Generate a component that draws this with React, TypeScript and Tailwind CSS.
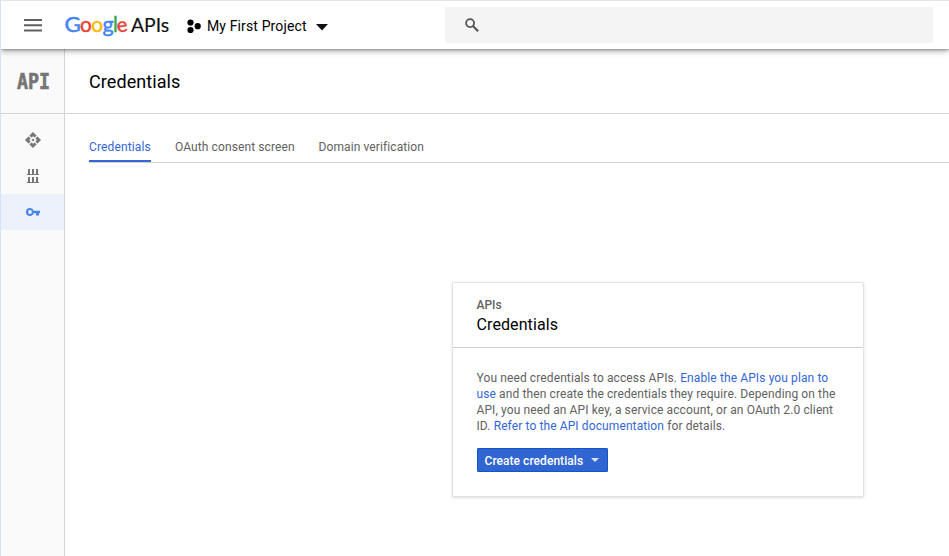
import React from "react";

function GoogleLogo() {
  return (
    <svg width="108" height="32" viewBox="0 0 108 32" className="ml-[21px] shrink-0" aria-label="Google APIs">
      <g fontFamily="Lato, sans-serif" fontSize="20.5" strokeWidth="0.45">
        <text x="1.5" y="23" fill="#4285f4" stroke="#4285f4" textLength="16.4" lengthAdjust="spacingAndGlyphs">G</text>
        <text x="17" y="23" fill="#ea4335" stroke="#ea4335" textLength="11.8" lengthAdjust="spacingAndGlyphs">o</text>
        <text x="28.2" y="23" fill="#fbbc05" stroke="#fbbc05" textLength="11.8" lengthAdjust="spacingAndGlyphs">o</text>
        <text x="39.4" y="23" fill="#4285f4" stroke="#4285f4" textLength="11.2" lengthAdjust="spacingAndGlyphs">g</text>
        <text x="50" y="23" fill="#34a853" stroke="#34a853">l</text>
        <text x="53.8" y="23" fill="#ea4335" stroke="#ea4335" textLength="10.7" lengthAdjust="spacingAndGlyphs" transform="rotate(-10 59 18)">e</text>
      </g>
      <text x="68" y="23" fontFamily="Lato, sans-serif" fontSize="20" fill="#111" stroke="#111" strokeWidth="0.15" textLength="38.2" lengthAdjust="spacingAndGlyphs">APIs</text>
    </svg>
  );
}

function Header() {
  return (
    <header className="relative z-10 flex h-[49px] shrink-0 items-start border-t border-[#e4e4e4] bg-white shadow-[0_1px_2px_rgba(0,0,0,0.22),0_2px_6px_rgba(0,0,0,0.35)]">
      <svg width="18" height="13" viewBox="0 0 18 13" className="mt-[18px] ml-[23px] shrink-0" fill="#616161">
        <path d="M0 0h18v2H0zM0 5.3h18v2H0zM0 10.6h18v2H0z" />
      </svg>
      <div className="mt-2 flex"><GoogleLogo /></div>
      <svg width="14" height="15" viewBox="0 0 14 15" className="mt-[18px] ml-[16px] shrink-0" fill="#000">
        <circle cx="3.5" cy="3.5" r="3.1" />
        <circle cx="10.7" cy="7.2" r="3.1" />
        <circle cx="3.5" cy="11" r="3.1" />
      </svg>
      <span className="mt-[15px] ml-[6px] w-[100px] text-[14px] leading-5 tracking-[0.13px] whitespace-nowrap text-black">My First Project</span>
      <svg width="12" height="7" viewBox="0 0 12 7" className="mt-[23px] ml-[9px] shrink-0">
        <path d="M0 0h12L6 6.5z" fill="#111" />
      </svg>
      <div className="mt-[6px] mr-4 ml-auto h-9 w-[488px] rounded-[2px] bg-[#f4f4f4] pt-[11px] pl-5">
        <svg width="14" height="14" viewBox="0 0 14 14" fill="none" stroke="#555">
          <circle cx="5.1" cy="5.1" r="4" strokeWidth="1.8" />
          <path d="M8.2 8.2l5 5" strokeWidth="2.1" />
        </svg>
      </div>
    </header>
  );
}

function Sidebar() {
  return (
    <aside className="flex w-[64px] shrink-0 flex-col border-r border-[#d4d4d4] bg-[#fafafa]">
      <div className="flex h-[65px] items-start border-b border-[#d4d4d4] pt-[14px] pl-[12px]">
        <svg width="44" height="36" viewBox="0 0 44 36" fill="#757575" stroke="#757575" strokeWidth="0.6">
          <text x="4" y="25.7" fontFamily="'DejaVu Sans Mono', monospace" fontWeight="700" fontSize="21" textLength="33" lengthAdjust="spacingAndGlyphs">API</text>
        </svg>
      </div>
      <div className="mt-2 flex h-9 items-center justify-center">
        <svg width="16" height="16" viewBox="0.5 0.5 23 23" fill="#757575" stroke="#757575" strokeWidth="0.9" strokeLinejoin="round">
          <path d="M12 6l2.12 2.12 2.5-2.5L12 1 7.38 5.62l2.5 2.5zM6 12l2.12-2.12-2.5-2.5L1 12l4.62 4.62 2.5-2.5zM18 12l-2.12 2.12 2.5 2.5L23 12l-4.62-4.62-2.5 2.5zM12 18l-2.12-2.12-2.5 2.5L12 23l4.62-4.62-2.5-2.5z" />
          <circle cx="12" cy="12" r="1.4" />
        </svg>
      </div>
      <div className="flex h-9 items-center justify-center">
        <svg width="12" height="14" viewBox="0 0 12 14" fill="#757575">
          <path d="M1 0h2v5h2V0h2v5h2V0h2v5h1v1H0V5h1zM1 8h2v5h2V8h2v5h2V8h2v5h1v1H0v-1h1z" />
        </svg>
      </div>
      <div className="flex h-9 items-center justify-center bg-[#ebf0fa]">
        <svg width="14" height="8" viewBox="0 0 14 8" fill="#4a86e8">
          <path fillRule="evenodd" d="M4 0a4 4 0 0 1 3.7 2.8H14v2.5h-1V7.5h-3V5.3H7.7A4 4 0 1 1 4 0zm0 2.1a1.9 1.9 0 1 0 0 3.8 1.9 1.9 0 0 0 0-3.8z" />
        </svg>
      </div>
    </aside>
  );
}

function CredentialsCard() {
  return (
    <section className="mt-[119px] ml-[387px] h-[215px] w-[412px] rounded-[2px] border border-[#e2e2e2] bg-white shadow-[0_1px_3px_rgba(0,0,0,0.14)]">
      <div className="h-[65px] border-b border-[#d0d0d0] pt-[14px] pl-[23.5px]">
        <div className="text-[12px] leading-4 font-medium text-[#616161]">APIs</div>
        <div className="mt-[1px] text-[16px] leading-[22px] tracking-[0.1px] text-black">Credentials</div>
      </div>
      <div className="pt-[22px] pl-[23.5px]">
        <p className="text-[12px] leading-4 tracking-[0.11px] whitespace-nowrap text-[#616161]">
          You need credentials to access APIs. <a className="text-[#3367d6]">Enable the APIs you plan to</a><br />
          <a className="text-[#3367d6]">use</a> and then create the credentials they require. Depending on the<br />
          API, you need an API key, a service account, or an OAuth 2.0 client<br />
          ID. <a className="text-[#3367d6]">Refer to the API documentation</a> for details.
        </p>
        <button className="mt-[14px] flex h-6 w-[131px] items-center rounded-[1px] border border-[#1155cc] bg-[#3065d2] pl-[7px] text-[12px] leading-4 font-medium tracking-[0.05px] whitespace-nowrap text-white">
          <span className="pt-px">Create credentials</span>
          <svg width="8" height="4" viewBox="0 0 8 4" className="ml-2">
            <path d="M0 0h8L4 4z" fill="#dbe6ff" />
          </svg>
        </button>
      </div>
    </section>
  );
}

export default function App() {
  return (
    <div className="flex h-[556px] w-[949px] flex-col overflow-hidden border-l border-[#d5e2f4] bg-white font-['Roboto',sans-serif]">
      <Header />
      <div className="flex min-h-0 flex-1">
        <Sidebar />
        <main className="min-w-0 flex-1">
          <div className="h-[65px] border-b border-[#d4d4d4] pt-[21px] pl-6">
            <h1 className="text-[18px] leading-6 tracking-[0.08px] text-black">Credentials</h1>
          </div>
          <nav className="ml-6 flex h-[49px] items-end gap-6 border-b border-[#d0d0d0] text-[12px] leading-4 tracking-[0.1px] whitespace-nowrap text-[#616161]">
            <a className="h-[23px] w-[62px] border-b-2 border-[#3367d6] tracking-[0.13px] text-[#3367d6]">Credentials</a>
            <a className="h-[23px] w-[119.5px]">OAuth consent screen</a>
            <a className="h-[23px]">Domain verification</a>
          </nav>
          <CredentialsCard />
        </main>
      </div>
    </div>
  );
}
